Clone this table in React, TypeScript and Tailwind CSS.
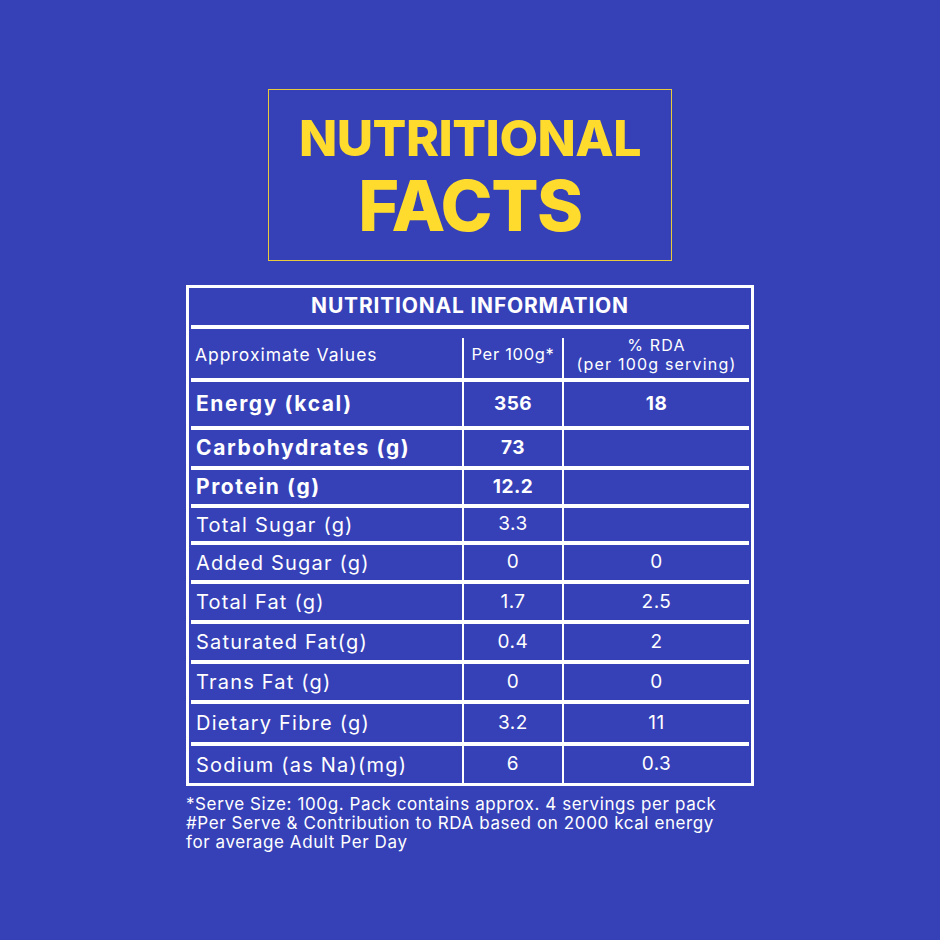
const rows = [
  { label: 'Energy (kcal)', per: '356', rda: '18', bold: true, h: 'h-[44px]' },
  { label: 'Carbohydrates (g)', per: '73', rda: '', bold: true, h: 'h-[36px]' },
  { label: 'Protein (g)', per: '12.2', rda: '', bold: true, h: 'h-[34px]' },
  { label: 'Total Sugar (g)', per: '3.3', rda: '', bold: false, h: 'h-[33px]' },
  { label: 'Added Sugar (g)', per: '0', rda: '0', bold: false, h: 'h-[35px]' },
  { label: 'Total Fat (g)', per: '1.7', rda: '2.5', bold: false, h: 'h-[36px]' },
  { label: 'Saturated Fat(g)', per: '0.4', rda: '2', bold: false, h: 'h-[36px]' },
  { label: 'Trans Fat (g)', per: '0', rda: '0', bold: false, h: 'h-[36px]' },
  { label: 'Dietary Fibre (g)', per: '3.2', rda: '11', bold: false, h: 'h-[38px]' },
  { label: 'Sodium (as Na)(mg)', per: '6', rda: '0.3', bold: false, h: 'h-[37px]' },
];

export default function App() {
  return (
    <div
      className="min-h-[940px] w-full bg-[#3641b8] pt-[89px] text-white"
      style={{ fontFamily: 'Inter, "Open Sans", sans-serif' }}
    >
      <div className="mx-auto flex h-[172px] w-[404px] flex-col items-center justify-center border-[1.5px] border-[#e8c93a] text-[#fedb2c]">
        <h1 className="text-[50px] font-extrabold leading-[62px] tracking-[-0.5px]">NUTRITIONAL</h1>
        <h1 className="text-[70px] font-extrabold leading-[74px] tracking-[-1.5px]">FACTS</h1>
      </div>

      <div className="mx-auto mt-[24px] w-[568px] border-[3px] border-white px-[2px]">
        <div className="flex h-[41px] items-center justify-center border-b-4 border-white pb-[2px] text-[21px] font-bold tracking-[0.8px]">
          NUTRITIONAL INFORMATION
        </div>

        <div className="flex h-[53px] border-b-4 border-white">
          <div className="flex w-[271px] items-center pl-[4px] pt-[4px] text-[17.5px] tracking-[1px]">Approximate Values</div>
          <div className="mt-[9px] w-[2px] bg-white" />
          <div className="flex w-[98px] items-center justify-center pt-[2px] text-[16.5px] tracking-[0.7px]">Per 100g*</div>
          <div className="mt-[9px] w-[2px] bg-white" />
          <div className="flex flex-1 flex-col items-center justify-center pt-[2px] text-[16px] leading-[19px] tracking-[1.2px]">
            <span>% RDA</span>
            <span>(per 100g serving)</span>
          </div>
        </div>

        {rows.map((r, i) => (
          <div
            key={r.label}
            className={`flex ${r.h} ${i < rows.length - 1 ? 'box-content border-b-4 border-white' : 'box-content'}`}
          >
            <div
              className={`flex w-[271px] items-center pl-[5px] ${
                r.bold ? 'text-[21px] font-bold tracking-[1.6px]' : 'text-[20px] tracking-[1.2px]'
              }`}
            >
              {r.label}
            </div>
            <div className="w-[2px] bg-white" />
            <div
              className={`flex w-[98px] items-center justify-center text-[19px] tracking-[0.5px] ${r.bold ? 'font-bold' : ''}`}
            >
              {r.per}
            </div>
            <div className="w-[2px] bg-white" />
            <div
              className={`flex flex-1 items-center justify-center text-[19px] tracking-[0.5px] ${r.bold ? 'font-bold' : ''}`}
            >
              {r.rda}
            </div>
          </div>
        ))}
      </div>

      <div className="mx-auto mt-[9px] w-[568px] text-[17px] leading-[19px] tracking-[0.6px]">
        <p>*Serve Size: 100g. Pack contains approx. 4 servings per pack</p>
        <p>#Per Serve &amp; Contribution to RDA based on 2000 kcal energy</p>
        <p>for average Adult Per Day</p>
      </div>
    </div>
  );
}
